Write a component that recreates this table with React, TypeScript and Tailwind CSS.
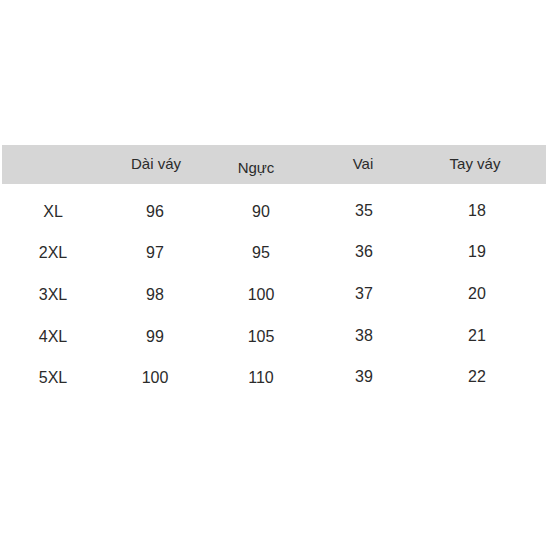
import React from "react";

const rows = [
    ["XL", "96", "90", "35", "18"],
    ["2XL", "97", "95", "36", "19"],
    ["3XL", "98", "100", "37", "20"],
    ["4XL", "99", "105", "38", "21"],
    ["5XL", "100", "110", "39", "22"],
];

// độ lệch dọc nhỏ theo từng cột (ảnh gốc không thẳng hàng tuyệt đối)
const colPad = ["pt-[2px]", "pt-[2px]", "pt-[2px]", "pt-0", "pt-0"];

const App: React.FC = () => {
    return (
        <div className="w-[546px] h-[546px] bg-white text-[#2b2b2b] font-['Liberation_Sans',Arial,sans-serif] pt-[145px]">
            {/* Nagłówek */}
            <div className="ml-[2px] h-[39px] bg-[#d6d6d6] grid grid-cols-[104px_100px_100px_114px_110px] items-center text-[15px]">
                <div></div>
                <div className="text-center pb-[1px]">Dài váy</div>
                <div className="text-center pt-[7px]">Ngực</div>
                <div className="text-center pb-[1px]">Vai</div>
                <div className="text-center pb-[1px]">Tay váy</div>
            </div>

            <div className="pt-[6px]">
                {rows.map((r) => (
                    <div key={r[0]} className="h-[41.6px] grid grid-cols-[106px_98px_114px_92px_134px] items-center text-[16px]">
                        {r.map((c, i) => (
                            <div key={i} className={`text-center ${colPad[i]}`}>
                                {c}
                            </div>
                        ))}
                    </div>
                ))}
            </div>
        </div>
    );
};

export default App;
